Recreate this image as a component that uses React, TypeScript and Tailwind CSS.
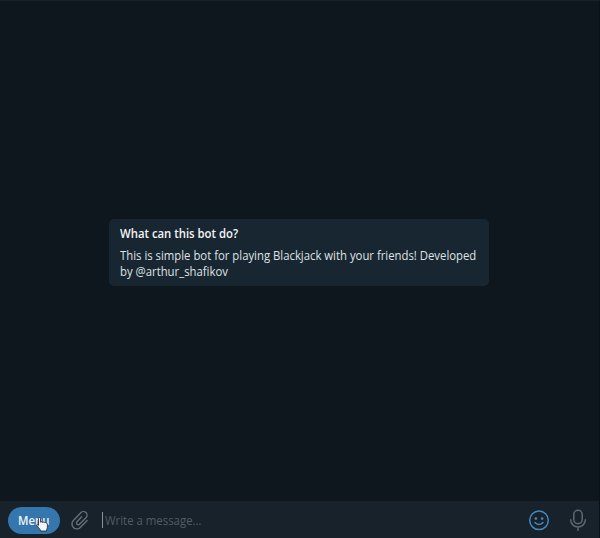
import React from "react";

function PaperclipIcon() {
  return (
    <svg width="20" height="22" viewBox="0 0 20 22" fill="none" stroke="#64717a" strokeWidth="1.4" strokeLinecap="round" strokeLinejoin="round">
      <path d="M11.7 7.8 7 12.8a1.7 1.7 0 0 0 2.5 2.4L16 8.7a3.6 3.6 0 0 0-5.2-5L3.4 11.5a4.8 4.8 0 0 0 6.9 6.9l6.8-7" />
    </svg>
  );
}

function SmileIcon() {
  return (
    <svg width="22" height="22" viewBox="0 0 22 22" fill="none" stroke="#4588bd" strokeWidth="1.5" strokeLinecap="round">
      <circle cx="11" cy="11.3" r="9.3" />
      <circle cx="7.9" cy="9.6" r="1.3" fill="#4588bd" stroke="none" />
      <circle cx="14.1" cy="9.6" r="1.3" fill="#4588bd" stroke="none" />
      <path d="M7 13.6c2 2.4 6 2.4 8 0" />
    </svg>
  );
}

function MicIcon() {
  return (
    <svg width="18" height="22" viewBox="0 0 18 22" fill="none" stroke="#5c6972" strokeWidth="1.5" strokeLinecap="round">
      <rect x="4.8" y="1.3" width="8.4" height="13.5" rx="4.2" />
      <path d="M1.7 10.8C1.7 20.3 16.3 20.3 16.3 10.8M9 18v3.3" />
    </svg>
  );
}

function HandCursor() {
  return (
    <svg className="absolute left-[28px] top-[10px]" width="12" height="15" viewBox="0 0 12 15" fill="#f4f4f4" stroke="#20262c" strokeWidth="0.8" strokeLinejoin="round">
      <path d="M2.5 1.3c0-1.2 2-1.2 2 0v4c.2-.9 1.8-.8 1.9.2.3-.8 1.8-.6 1.9.3.4-.8 2-.5 2 .5.2-.4 1.1-.2 1.1.7v3.2c0 1.4-.9 2-.9 3.8h-6c0-1.7-1.8-3-3.5-5.3C.2 7.5 1 7 2.5 8.3z" />
    </svg>
  );
}

export default function App() {
  return (
    <div className="flex h-[538px] w-[600px] flex-col overflow-hidden border-r border-t border-r-[#0a1017] border-t-[#17222b] bg-[#0e161e] font-['Open_Sans',sans-serif] text-[12px]">
      <main className="flex flex-1 items-start pl-[109px] pt-[218px]">
        <section className="h-[67px] w-[380px] rounded-[5px] bg-[#182631] px-[11px] pt-[6px] leading-4 text-[#dfe3e5]">
          <h1 className="origin-left scale-x-[0.944] pt-px font-semibold text-[#f5f5f5]">What can this bot do?</h1>
          <p className="mt-[6px] origin-left scale-x-[0.944] whitespace-nowrap">
            This is simple bot for playing Blackjack with your friends! Developed
            <br />
            by @arthur_shafikov
          </p>
        </section>
      </main>
      <footer className="flex h-[37px] items-center bg-[#17222a] pl-2 pr-3">
        <button className="relative mt-[2px] h-[27px] w-[52px] rounded-full bg-[#3576ae] pl-[10px] text-left font-semibold leading-[27px] text-[#f1f5f8]">
          <span className="inline-block origin-left scale-x-[0.944]">Menu</span>
          <HandCursor />
        </button>
        <div className="ml-[10px]">
          <PaperclipIcon />
        </div>
        <div className="ml-3 h-4 w-px bg-[#8a949b]" />
        <span className="ml-[2px] flex-1 origin-left scale-x-[0.95] pt-[2px] text-[#4f5d68]">Write a message...</span>
        <SmileIcon />
        <div className="ml-[19px]">
          <MicIcon />
        </div>
      </footer>
    </div>
  );
}
